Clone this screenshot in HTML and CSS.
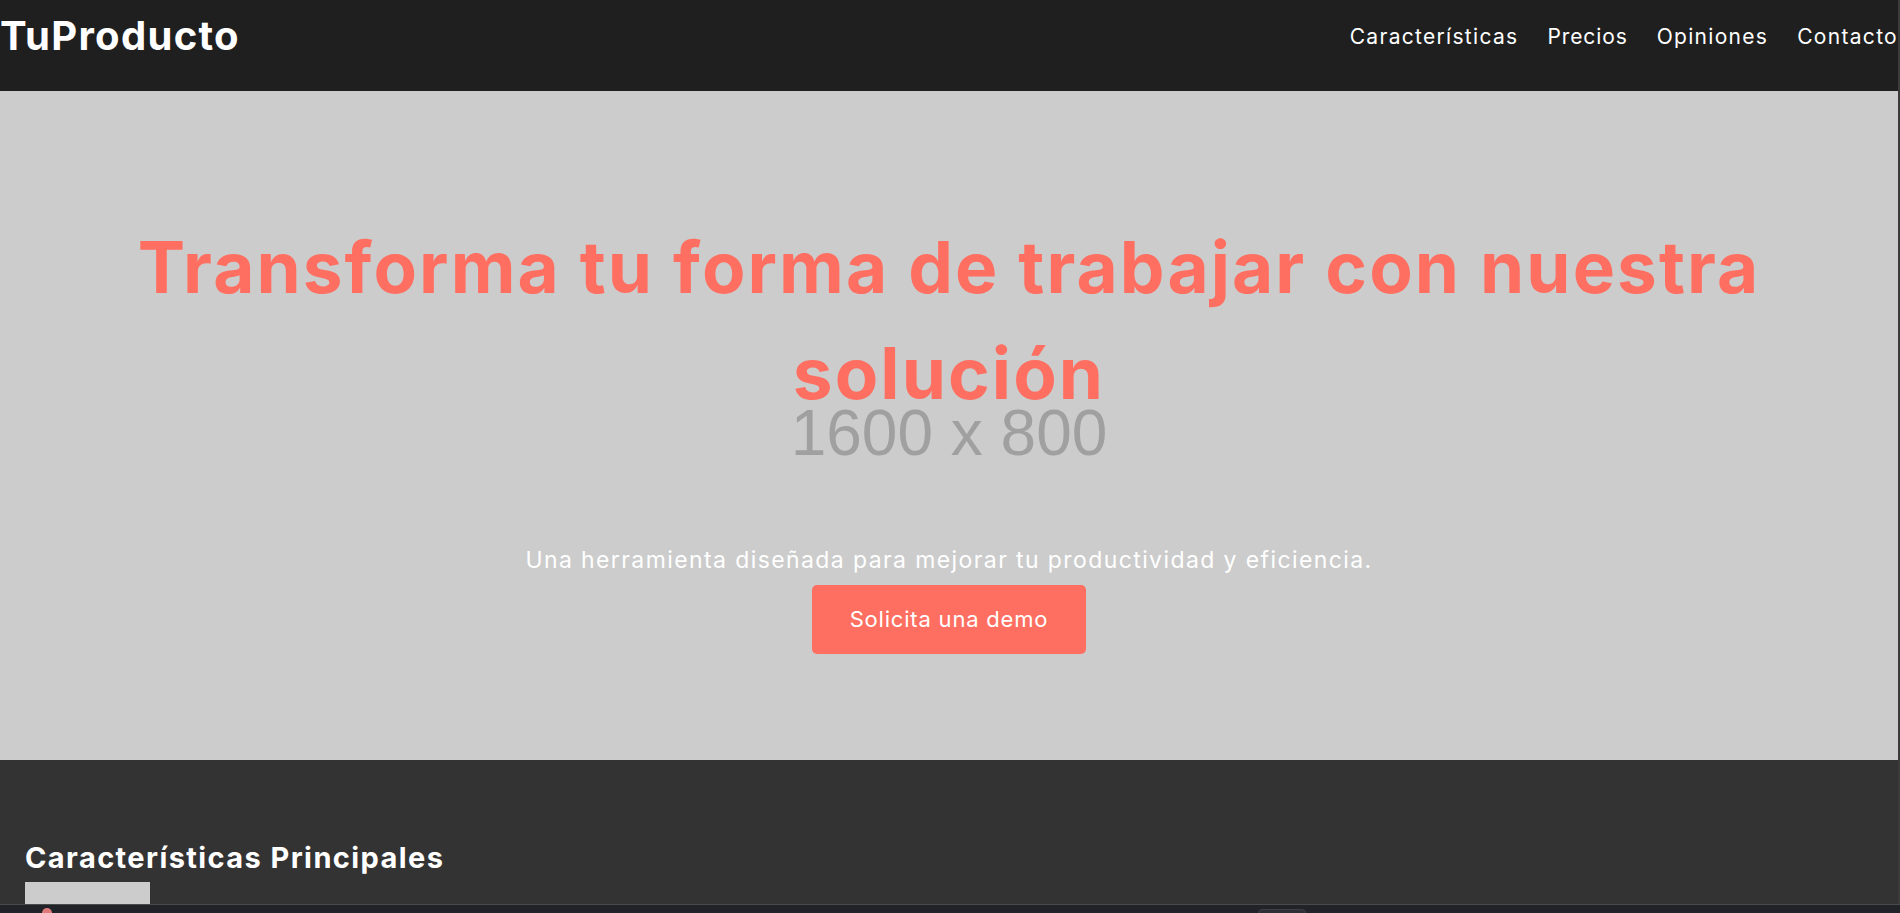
FILE: index.html
```html
<!DOCTYPE html>
<html lang="es">
<head>
<meta charset="utf-8">
<title>TuProducto</title>
<link rel="stylesheet" href="styles.css">
</head>
<body>
<header class="site-header">
  <div class="header-row">
    <div class="logo">TuProducto</div>
    <nav class="main-nav">
      <a href="#caracteristicas">Características</a>
      <a href="#precios">Precios</a>
      <a href="#opiniones">Opiniones</a>
      <a href="#contacto">Contacto</a>
    </nav>
  </div>
</header>

<section class="hero">
  <span class="hero-placeholder">1600 x 800</span>
  <div class="hero-content">
    <h1 class="hero-title">Transforma tu forma de trabajar con nuestra solución</h1>
    <p class="hero-sub">Una herramienta diseñada para mejorar tu productividad y eficiencia.</p>
    <a class="hero-btn" href="#demo">Solicita una demo</a>
  </div>
</section>

<section class="features" id="caracteristicas">
  <h2 class="features-title">Características Principales</h2>
  <div class="feature-img"></div>
</section>

<div class="window-edge"></div>
<div class="taskbar">
  <span class="taskbar-icon"></span>
  <span class="taskbar-tab"></span>
</div>
</body>
</html>
```

FILE: styles.css
```css
* { box-sizing: border-box; }

html, body {
  margin: 0;
  padding: 0;
}

body {
  font-family: "Inter", "Noto Sans", "Liberation Sans", sans-serif;
  background: #333333;
  color: #ffffff;
  width: 1898px;
}

.site-header {
  background: #1f1f1f;
  height: 91px;
  padding-top: 10px;
}

.header-row {
  height: 52px;
  display: flex;
  align-items: center;
  justify-content: space-between;
}

.logo {
  font-weight: 700;
  font-size: 40px;
  letter-spacing: 1.3px;
  color: #ffffff;
  line-height: 52px;
}

.main-nav {
  display: flex;
  gap: 29px;
  padding-top: 2px;
}

.main-nav a {
  color: #ffffff;
  text-decoration: none;
  font-size: 21px;
  letter-spacing: 1.3px;
  line-height: 28px;
}

.main-nav a:nth-child(2) {
  letter-spacing: 0.9px;
}

.hero {
  position: relative;
  background: #cccccc;
  height: 669px;
  padding-top: 123px;
  text-align: center;
  overflow: hidden;
}

.hero-placeholder {
  position: absolute;
  left: 0;
  right: 0;
  top: 302px;
  font-family: "Liberation Sans", Arial, sans-serif;
  font-size: 64px;
  line-height: 80px;
  color: #a0a0a0;
  text-align: center;
  z-index: 0;
}

.hero-content {
  position: relative;
  z-index: 1;
  display: flex;
  flex-direction: column;
  align-items: center;
}

.hero-title {
  margin: 0;
  max-width: 1760px;
  font-size: 71px;
  line-height: 106px;
  font-weight: 700;
  letter-spacing: 2.1px;
  color: #ff6f61;
}

.hero-sub {
  margin: 119px 0 10px;
  font-size: 23px;
  line-height: 30px;
  letter-spacing: 1.4px;
  color: #ffffff;
}

.hero-btn {
  display: inline-block;
  background: #ff6f61;
  color: #ffffff;
  text-decoration: none;
  font-size: 22px;
  line-height: 29px;
  letter-spacing: 0.8px;
  padding: 20px 38px;
  border-radius: 5px;
}

.features {
  background: #333333;
  padding: 80px 25px 40px;
}

.features-title {
  margin: 0;
  font-size: 29px;
  line-height: 36px;
  font-weight: 700;
  letter-spacing: 1.4px;
  color: #ffffff;
}

.feature-img {
  margin-top: 6px;
  width: 125px;
  height: 125px;
  background: #cccccc;
}

.window-edge {
  position: fixed;
  top: 0;
  right: 0;
  width: 2px;
  height: 100%;
  background: #3b3b3b;
  z-index: 5;
}

.taskbar {
  position: fixed;
  left: 0;
  right: 0;
  bottom: 0;
  height: 9px;
  background: #202327;
  border-top: 1px solid #4a4a4a;
  z-index: 6;
}

.taskbar-icon {
  position: absolute;
  left: 42px;
  top: 3px;
  width: 10px;
  height: 10px;
  border-radius: 50%;
  background: #e07a7a;
}

.taskbar-tab {
  position: absolute;
  left: 1258px;
  top: 4px;
  width: 48px;
  height: 10px;
  border-radius: 4px;
  background: #2c2f34;
  border: 1px solid #3c3f44;
}
```
